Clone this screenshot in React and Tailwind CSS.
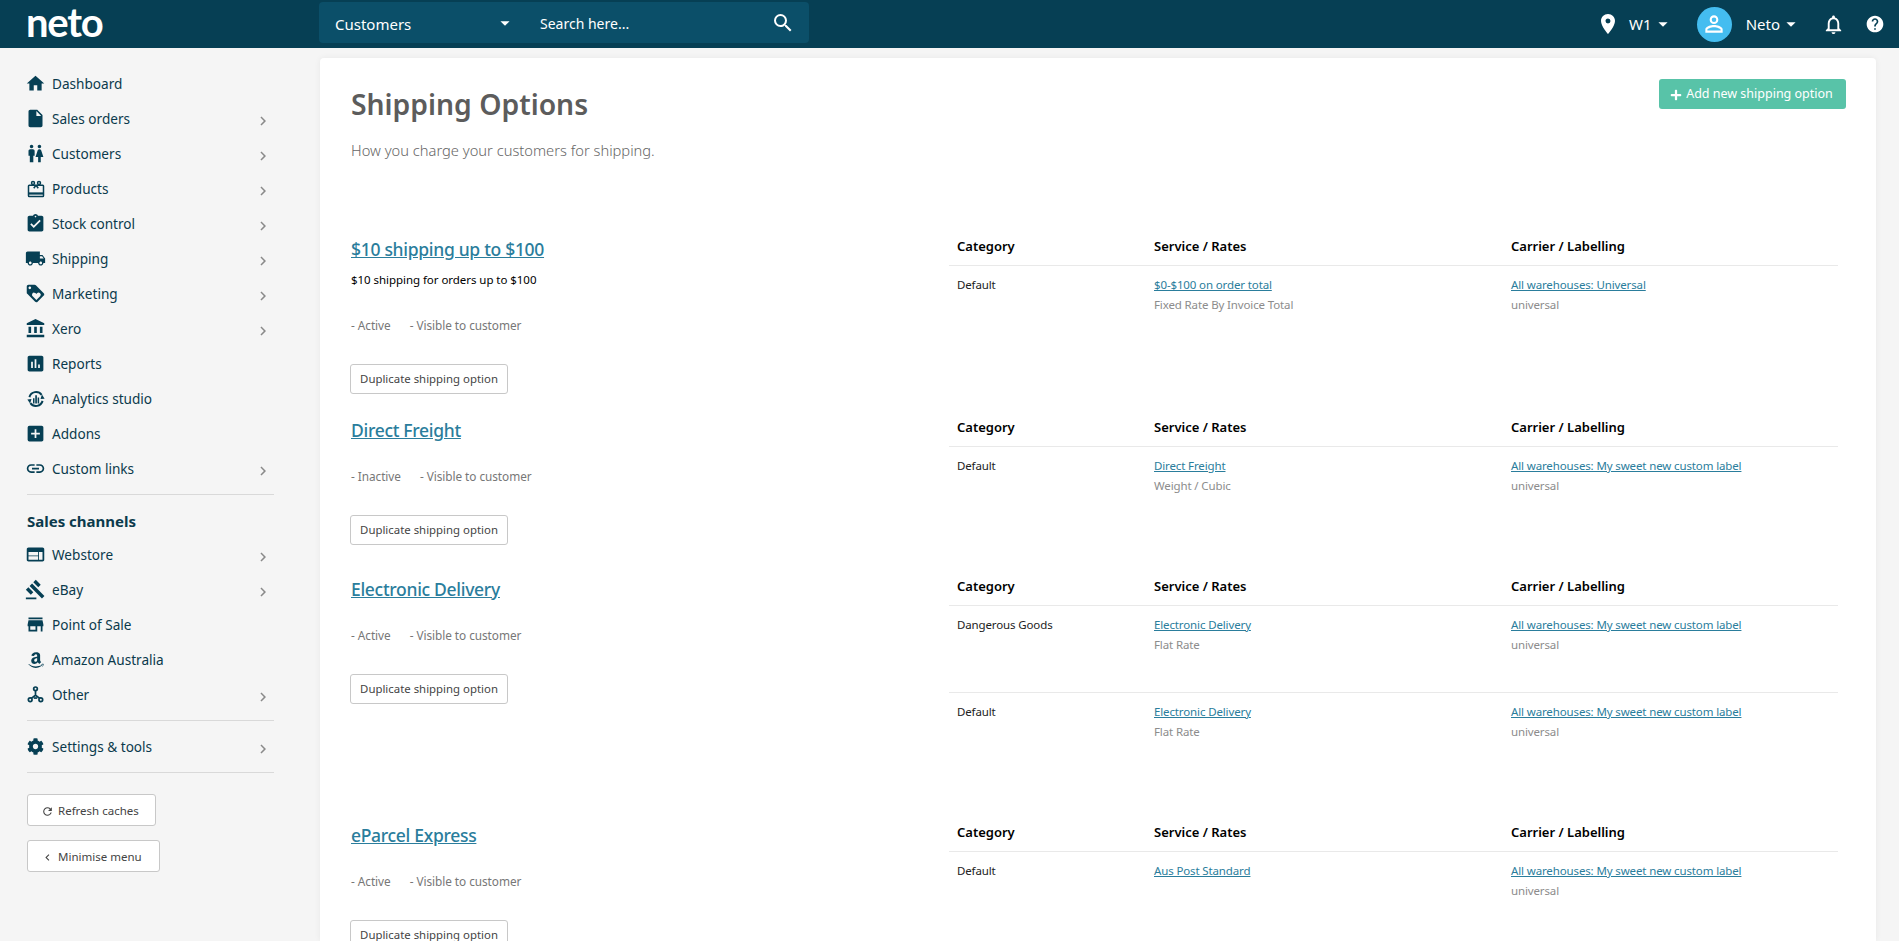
import { FaAmazon, FaCog, FaPlus } from 'react-icons/fa'
import {
  MdAccountBalance, MdAddBox, MdArrowDropDown, MdAssessment, MdAssignmentTurnedIn,
  MdChevronLeft, MdChevronRight, MdGavel, MdHelp, MdHome, MdInsertDriveFile, MdLink,
  MdLocalShipping, MdLoyalty, MdNotificationsNone, MdPersonOutline, MdPlace, MdRefresh, MdSearch,
  MdStore, MdWc, MdWeb,
} from 'react-icons/md'

function AnalyticsIcon({ className }) {
  return (
    <svg viewBox="0 0 24 24" className={className} fill="none" stroke="currentColor" strokeWidth="2.6">
      <path d="M3.2 9.5A9.2 9.2 0 0 1 19.5 6.5" />
      <path d="M20.8 14.5A9.2 9.2 0 0 1 4.5 17.5" />
      <path d="M23.5 11.5l-5.5.6 1.9-6z" fill="currentColor" stroke="none" />
      <path d="M.5 12.5l5.5-.6-1.9 6z" fill="currentColor" stroke="none" />
      <path d="M8 11h2v7H8zM11 7h2.2v11H11zM14.2 10h2v8h-2z" fill="currentColor" stroke="none" />
    </svg>
  )
}

function GiftIcon({ className }) {
  return (
    <svg viewBox="0 0 24 24" className={className} fill="none" stroke="currentColor" strokeWidth="2">
      <circle cx="8" cy="4" r="2" />
      <circle cx="16" cy="4" r="2" />
      <path d="M12 7L9 11M12 7l3 4" />
      <rect x="2" y="7" width="20" height="15" rx="1" />
      <path d="M2 18h20" strokeWidth="3" />
    </svg>
  )
}

function HubIcon({ className }) {
  return (
    <svg viewBox="0 0 24 24" className={className} fill="none" stroke="currentColor" strokeWidth="2.4">
      <circle cx="12" cy="4" r="2.6" />
      <circle cx="4.5" cy="19.5" r="2.6" />
      <circle cx="19.5" cy="19.5" r="2.6" />
      <path d="M12 6.6V13M12 13l-6 4.5M12 13l6 4.5" />
      <path d="M9.5 17h5" />
    </svg>
  )
}

const mainNav = [
  { label: 'Dashboard', icon: MdHome },
  { label: 'Sales orders', icon: MdInsertDriveFile, arrow: true },
  { label: 'Customers', icon: MdWc, arrow: true },
  { label: 'Products', icon: GiftIcon, size: 'h-[18px] w-[18px]', arrow: true },
  { label: 'Stock control', icon: MdAssignmentTurnedIn, arrow: true },
  { label: 'Shipping', icon: MdLocalShipping, arrow: true },
  { label: 'Marketing', icon: MdLoyalty, arrow: true },
  { label: 'Xero', icon: MdAccountBalance, arrow: true },
  { label: 'Reports', icon: MdAssessment },
  { label: 'Analytics studio', icon: AnalyticsIcon, size: 'h-[18px] w-[18px]' },
  { label: 'Addons', icon: MdAddBox },
  { label: 'Custom links', icon: MdLink, arrow: true },
]

const channelNav = [
  { label: 'Webstore', icon: MdWeb, arrow: true },
  { label: 'eBay', icon: MdGavel, arrow: true },
  { label: 'Point of Sale', icon: MdStore },
  { label: 'Amazon Australia', icon: FaAmazon, size: 'h-[18px] w-[18px]' },
  { label: 'Other', icon: HubIcon, size: 'h-[17px] w-[17px]', arrow: true },
]

const wh = 'All warehouses: My sweet new custom label'

const options = [
  {
    title: '$10 shipping up to $100',
    desc: '$10 shipping for orders up to $100',
    status: 'Active',
    height: 'h-[181px]',
    statusTop: 'mt-[29px]',
    rows: [{ cat: 'Default', rate: '$0-$100 on order total', rateSub: 'Fixed Rate By Invoice Total', label: 'All warehouses: Universal', labelSub: 'universal' }],
  },
  {
    title: 'Direct Freight',
    status: 'Inactive',
    height: 'h-[159px]',
    statusTop: 'mt-[24px]',
    rows: [{ cat: 'Default', rate: 'Direct Freight', rateSub: 'Weight / Cubic', label: wh, labelSub: 'universal' }],
  },
  {
    title: 'Electronic Delivery',
    status: 'Active',
    height: 'h-[246px]',
    statusTop: 'mt-[24px]',
    rows: [
      { cat: 'Dangerous Goods', rate: 'Electronic Delivery', rateSub: 'Flat Rate', label: wh, labelSub: 'universal' },
      { cat: 'Default', rate: 'Electronic Delivery', rateSub: 'Flat Rate', label: wh, labelSub: 'universal' },
    ],
  },
  {
    title: 'eParcel Express',
    status: 'Active',
    height: 'h-[160px]',
    statusTop: 'mt-[24px]',
    rows: [{ cat: 'Default', rate: 'Aus Post Standard', rateSub: '', label: wh, labelSub: 'universal' }],
  },
]

function NavItem({ item }) {
  const Icon = item.icon
  return (
    <div className="flex h-[35px] items-center">
      <span className="-ml-[2px] flex h-[21px] w-[21px] shrink-0 -translate-y-[1px] items-center justify-center">
        <Icon className={`${item.size || 'h-[21px] w-[21px]'} text-[#063f54]`} />
      </span>
      <span className="ml-[6px] text-[13.6px] text-[#0b3a4c]">{item.label}</span>
      {item.arrow && <MdChevronRight className="ml-auto mr-[2px] mt-[2px] h-[18px] w-[18px] text-[#8a8a8a]" />}
    </div>
  )
}

function ShippingOption({ option }) {
  return (
    <div className={`flex ${option.height}`}>
      <div className="w-[600px] shrink-0 pt-[6px]">
        <a className="ml-[1px] text-[17.5px] font-medium leading-[28px] tracking-[-0.3px] text-[#2a7d9c] underline">{option.title}</a>
        {option.desc && <p className="ml-[1px] mt-[9px] text-[11.5px] leading-[16px] tracking-[-0.05px] text-black">{option.desc}</p>}
        <div className={`${option.statusTop} ml-[1px] flex gap-[19px] text-[11.8px] leading-[16px] tracking-[-0.05px] text-[#777777]`}>
          <span>- {option.status}</span>
          <span>- Visible to customer</span>
        </div>
        <button className="mt-[31px] h-[30px] w-[158px] rounded-[3px] border border-[#c8c8c8] bg-white text-[11.4px] text-[#444444]">
          Duplicate shipping option
        </button>
      </div>
      <div className="ml-[-1px] w-[889px]">
        <div className="grid h-[37px] grid-cols-[197px_357px_1fr] items-center border-b border-[#e9e9e9] pl-[8px] pb-[1px] text-[13px] font-semibold text-black">
          <span>Category</span>
          <span>Service / Rates</span>
          <span>Carrier / Labelling</span>
        </div>
        {option.rows.map((row, i) => (
          <div key={i} className={`grid h-[87px] grid-cols-[197px_357px_1fr] pl-[8px] pt-[9px] text-[11.5px] leading-[20px] tracking-[-0.13px] ${i < option.rows.length - 1 ? 'border-b border-[#e9e9e9]' : ''}`}>
            <span className="text-[#222222]">{row.cat}</span>
            <div>
              <a className="block text-[#2a7d9c] underline">{row.rate}</a>
              <span className="text-[#8c8c8c]">{row.rateSub}</span>
            </div>
            <div>
              <a className="block text-[#2a7d9c] underline">{row.label}</a>
              <span className="text-[#8c8c8c]">{row.labelSub}</span>
            </div>
          </div>
        ))}
      </div>
    </div>
  )
}

export default function App() {
  return (
    <div className="flex h-screen flex-col overflow-hidden bg-[#f5f5f5] font-['Noto_Sans',sans-serif]">
      <header className="flex h-[48px] shrink-0 items-center bg-[#063f54] text-white">
        <div className="mb-[4px] w-[319px] shrink-0 pl-[26px] font-['Lato',sans-serif] text-[40px] font-bold leading-[44px] tracking-[-1.2px]">neto</div>
        <div className="mb-[3px] flex h-[41px] w-[490px] items-center rounded-[4px] bg-[#0b4f69] pl-[16px] pr-[14px] text-[14px]">
          <span className="mt-[3px] w-[159px] text-[15px]">Customers</span>
          <MdArrowDropDown className="h-[22px] w-[22px]" />
          <span className="ml-[24px] mt-[1px] flex-1">Search here...</span>
          <MdSearch className="h-[24px] w-[24px]" />
        </div>
        <div className="ml-auto flex items-center pr-[14px] text-[15px]">
          <MdPlace className="h-[24px] w-[24px]" />
          <span className="ml-[9px]">W1</span>
          <MdArrowDropDown className="h-[22px] w-[22px]" />
          <span className="ml-[23px] flex h-[35px] w-[35px] items-center justify-center rounded-full bg-[#44bdf0]">
            <MdPersonOutline className="h-[26px] w-[26px]" />
          </span>
          <span className="ml-[14px]">Neto</span>
          <MdArrowDropDown className="h-[22px] w-[22px]" />
          <MdNotificationsNone className="ml-[20px] h-[23px] w-[23px]" />
          <MdHelp className="ml-[20px] h-[20px] w-[20px]" />
        </div>
      </header>

      <div className="flex min-h-0 flex-1">
        <aside className="w-[320px] shrink-0 pl-[27px] pt-[19px]">
          <div className="w-[247px]">
            {mainNav.map(item => <NavItem key={item.label} item={item} />)}
            <hr className="mt-[7px] border-[#d9d9d9]" />
            <h3 className="mt-[16px] mb-[7px] text-[15px] font-bold leading-[20px] text-[#0b3a4c]">Sales channels</h3>
            {channelNav.map(item => <NavItem key={item.label} item={item} />)}
            <hr className="mt-[7px] border-[#d9d9d9]" />
            <div className="pt-[9px] pb-[7px]"><NavItem item={{ label: 'Settings & tools', icon: FaCog, size: 'h-[17px] w-[17px]', arrow: true }} /></div>
            <hr className="border-[#d9d9d9]" />
            <div className="mt-[21px] flex flex-col items-start gap-[14px] text-[11.5px] text-[#444444]">
              <button className="flex h-[32px] w-[129px] items-center rounded-[3px] border border-[#c8c8c8] bg-white pl-[13px] pt-[2px]">
                <MdRefresh className="h-[13px] w-[13px]" />
                <span className="ml-[4px]">Refresh caches</span>
              </button>
              <button className="flex h-[32px] w-[133px] items-center rounded-[3px] border border-[#c8c8c8] bg-white pl-[13px] pt-[2px]">
                <MdChevronLeft className="h-[13px] w-[13px]" />
                <span className="ml-[4px]">Minimise menu</span>
              </button>
            </div>
          </div>
        </aside>

        <main className="mt-[10px] mr-[23px] flex-1 rounded-t-[4px] bg-white pl-[30px] pr-[30px] shadow-[0_0_6px_rgba(0,0,0,0.06)]">
          <div className="flex h-[171px] items-start justify-between">
            <div>
              <h1 className="ml-[1px] mt-[26px] text-[28.3px] font-semibold leading-[40px] text-[#5c5c5c]">Shipping Options</h1>
              <p className="ml-[1px] mt-[15px] text-[14.7px] font-light leading-[22px] text-[#666666]">How you charge your customers for shipping.</p>
            </div>
            <button className="mt-[21px] flex h-[30px] w-[187px] items-center justify-center rounded-[3px] bg-[#58c3a8] pt-[1px] pr-[2px] text-[12.5px] text-white">
              <FaPlus className="mr-[4px] h-[12px] w-[12px]" />
              Add new shipping option
            </button>
          </div>
          {options.map(option => <ShippingOption key={option.title} option={option} />)}
        </main>
      </div>
    </div>
  )
}
